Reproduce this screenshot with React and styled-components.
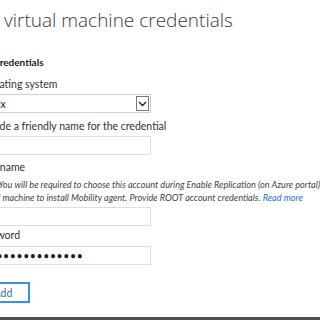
import styled, {createGlobalStyle} from "styled-components";

const Global = createGlobalStyle`
  html, body {
    margin: 0;
    padding: 0;
    background: #fff;
  }
  body {
    font-family: Lato, "Open Sans", sans-serif;
    color: #333;
  }
`

const Page = styled.div`
  height: 317px;
  width: 320px;
  overflow: hidden;
  border-bottom: 3px solid #505050;
`

const Panel = styled.div`
  margin-left: -24px;
  width: 344px;
  padding-top: 8px;
`

const Title = styled.h1`
  margin: 0 0 0 -11px;
  font-family: "Open Sans", sans-serif;
  font-size: 19px;
  font-weight: 300;
  line-height: 24px;
  color: #3a3a3a;
  white-space: nowrap;
`

const Section = styled.h2`
  margin: 22px 0 0;
  font-size: 10px;
  font-weight: 700;
  line-height: 16px;
  color: #222;
  white-space: nowrap;
`

const Label = styled.div`
  margin-top: ${p => p.$gap}px;
  font-size: 10.5px;
  line-height: 16px;
  color: #333;
  white-space: nowrap;
`

const Notes = styled.div`
  margin-top: 3px;
`

const Note = styled.p`
  margin: 0;
  font-size: 9.1px;
  font-style: italic;
  line-height: 13px;
  color: #444;
  white-space: nowrap;

  & a {
    color: #2a72c8;
    text-decoration: none;
  }
`

const Field = styled.input`
  display: block;
  box-sizing: border-box;
  width: 175px;
  height: 19px;
  margin-top: ${p => p.$gap}px;
  padding: 0 6px;
  border: 1px solid #dedede;
  background: #fff;
  font-family: inherit;
  font-size: 10.5px;
  color: #222;
  outline: none;

  &[type="password"] {
    letter-spacing: 0.6px;
  }
`

const Select = styled.div`
  display: flex;
  align-items: center;
  box-sizing: border-box;
  width: 175px;
  height: 19px;
  margin-top: 2px;
  padding-left: 4px;
  border: 1px solid #d0d0d0;
  font-size: 10.5px;
  color: #222;
`

const SelectValue = styled.span`
  flex: 1;
`

const Chevron = styled.span`
  display: flex;
  align-items: center;
  justify-content: center;
  width: 13px;
  height: 15px;
  margin-right: 1px;
  border: 1px solid #7a7a7a;
  box-sizing: border-box;
`

const Button = styled.button`
  display: block;
  box-sizing: border-box;
  width: 54px;
  height: 21px;
  margin-top: 17px;
  padding: 0;
  border: 2px solid #3f8ee0;
  background: #fff;
  font-family: inherit;
  font-size: 10.5px;
  color: #2f6fb8;
`

export default function App() {
  return (
    <Page>
      <Global/>
      <Panel>
        <Title>Add virtual machine credentials</Title>

        <Section>VM credentials</Section>

        <Label $gap={6}>Operating system</Label>
        <Select>
          <SelectValue>Linux</SelectValue>
          <Chevron>
            <svg width="9" height="6" viewBox="0 0 9 6">
              <path d="M1 1 L4.5 4.5 L8 1" fill="none" stroke="#222" strokeWidth="1.4"/>
            </svg>
          </Chevron>
        </Select>

        <Label $gap={5}>Provide a friendly name for the credential</Label>
        <Field type="text" readOnly value="" $gap={2}/>

        <Label $gap={4}>User name</Label>
        <Notes>
          <Note>Note: You will be required to choose this account during Enable Replication (on Azure portal) of your</Note>
          <Note>virtual machine to install Mobility agent. Provide ROOT account credentials. <a href="#">Read more</a></Note>
        </Notes>
        <Field type="text" readOnly value="" $gap={3}/>

        <Label $gap={1}>Password</Label>
        <Field type="password" readOnly value="passwordpasswor" $gap={3}/>

        <Button>Add</Button>
      </Panel>
    </Page>
  )
}
